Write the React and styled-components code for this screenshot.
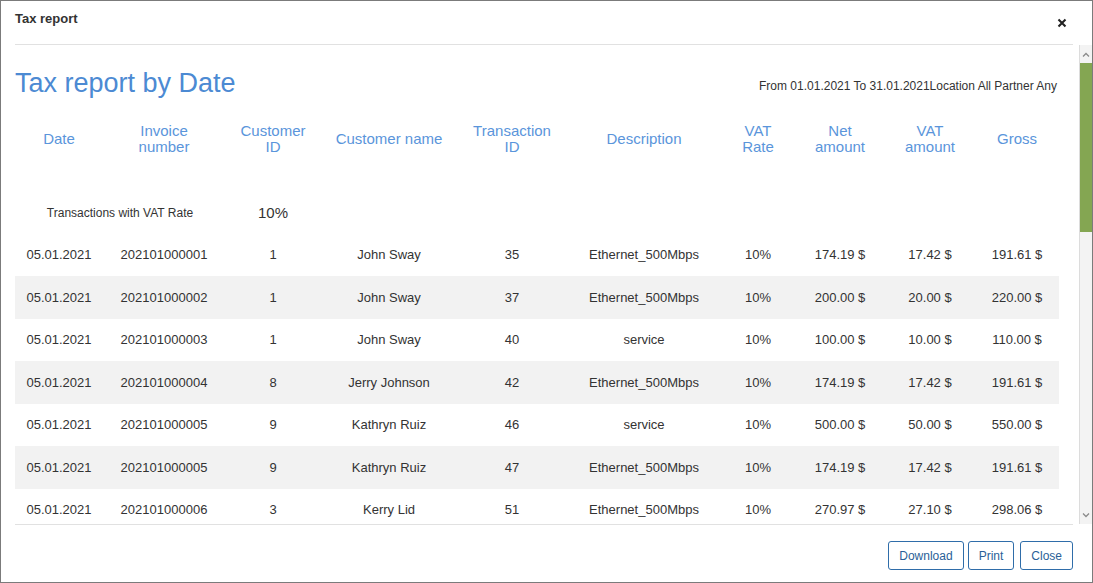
import React from 'react';
import styled, { createGlobalStyle } from 'styled-components';

const GlobalStyle = createGlobalStyle`
  html, body {
    margin: 0;
    padding: 0;
    background: #fff;
  }
  body {
    font-family: "Liberation Sans", Arial, sans-serif;
    color: #333;
  }
`;

const COLS = '88px 122px 96px 136px 110px 154px 74px 90px 90px 84px';

const Modal = styled.div`
  width: 1093px;
  height: 583px;
  box-sizing: border-box;
  border: 1px solid #7b7b7b;
  background: #fff;
  display: flex;
  flex-direction: column;
  overflow: hidden;
`;

const Header = styled.div`
  height: 43px;
  margin: 0 19px 0 14px;
  border-bottom: 1px solid #e1e1e1;
  display: flex;
  justify-content: space-between;
  align-items: flex-start;
`;

const ModalTitle = styled.div`
  padding-top: 9px;
  font-size: 13px;
  line-height: 17px;
  font-weight: bold;
  color: #333;
`;

const CloseX = styled.button`
  margin: 17px 6px 0 0;
  padding: 0;
  border: 0;
  background: none;
  width: 10px;
  height: 10px;
  display: flex;
  cursor: pointer;
`;

const Body = styled.div`
  height: 479px;
  display: flex;
`;

const Content = styled.div`
  flex: 1;
  padding: 0 20px 0 14px;
  overflow: hidden;
`;

const TitleRow = styled.div`
  display: flex;
  justify-content: space-between;
  align-items: flex-start;
  padding-top: 23px;
`;

const ReportTitle = styled.h1`
  margin: 0;
  font-size: 27px;
  line-height: 31px;
  font-weight: normal;
  color: #4c8ad3;
`;

const Filters = styled.div`
  margin: 11px 2px 0 0;
  font-size: 12px;
  line-height: 14px;
  color: #333;
`;

const Grid = styled.div`
  display: grid;
  grid-template-columns: ${COLS};
  align-items: center;
  text-align: center;
`;

const HeadRow = styled(Grid)`
  height: 50px;
  margin-top: 14.5px;
  font-size: 15px;
  line-height: 16px;
  color: #5a95db;
`;

const GroupRow = styled(Grid)`
  height: 42px;
  padding-top: 28px;
`;

const GroupLabel = styled.div`
  grid-column: span 2;
  font-size: 12px;
  color: #333;
`;

const GroupRate = styled.div`
  font-size: 15px;
  color: #333;
`;

const Row = styled(Grid)`
  height: 42.5px;
  font-size: 13px;
  color: #333;
  background: ${(p) => (p.$striped ? '#f2f2f2' : 'transparent')};
`;

const Scrollbar = styled.div`
  width: 12px;
  border-left: 1px solid #dcdcdc;
  background: #f3f3f3;
  display: flex;
  flex-direction: column;
`;

const ScrollArrow = styled.div`
  height: 18px;
  display: flex;
  align-items: center;
  justify-content: center;
`;

const Thumb = styled.div`
  height: 169px;
  background: #84a652;
`;

const ScrollTrack = styled.div`
  flex: 1;
`;

const Footer = styled.div`
  flex: 1;
  margin: 0 19px 0 14px;
  border-top: 1px solid #e1e1e1;
  display: flex;
  justify-content: flex-end;
  align-items: flex-start;
  padding-top: 16px;
  gap: 4px;
`;

const Button = styled.button`
  height: 29px;
  padding: 0 10px;
  border: 1px solid #2f6da9;
  border-radius: 3px;
  background: #fff;
  color: #2a5f98;
  font-family: "Liberation Sans", Arial, sans-serif;
  font-size: 12px;
  cursor: pointer;
  &:last-child {
    margin-left: 2px;
  }
`;

const headers = [
  ['Date'],
  ['Invoice', 'number'],
  ['Customer', 'ID'],
  ['Customer name'],
  ['Transaction', 'ID'],
  ['Description'],
  ['VAT', 'Rate'],
  ['Net', 'amount'],
  ['VAT', 'amount'],
  ['Gross'],
];

const rows = [
  ['05.01.2021', '202101000001', '1', 'John Sway', '35', 'Ethernet_500Mbps', '10%', '174.19 $', '17.42 $', '191.61 $'],
  ['05.01.2021', '202101000002', '1', 'John Sway', '37', 'Ethernet_500Mbps', '10%', '200.00 $', '20.00 $', '220.00 $'],
  ['05.01.2021', '202101000003', '1', 'John Sway', '40', 'service', '10%', '100.00 $', '10.00 $', '110.00 $'],
  ['05.01.2021', '202101000004', '8', 'Jerry Johnson', '42', 'Ethernet_500Mbps', '10%', '174.19 $', '17.42 $', '191.61 $'],
  ['05.01.2021', '202101000005', '9', 'Kathryn Ruiz', '46', 'service', '10%', '500.00 $', '50.00 $', '550.00 $'],
  ['05.01.2021', '202101000005', '9', 'Kathryn Ruiz', '47', 'Ethernet_500Mbps', '10%', '174.19 $', '17.42 $', '191.61 $'],
  ['05.01.2021', '202101000006', '3', 'Kerry Lid', '51', 'Ethernet_500Mbps', '10%', '270.97 $', '27.10 $', '298.06 $'],
];

function Chevron({ up }) {
  return (
    <svg width="8" height="5" viewBox="0 0 8 5">
      <path
        d={up ? 'M1 4.5 L4 1.5 L7 4.5' : 'M1 0.5 L4 3.5 L7 0.5'}
        fill="none"
        stroke="#8a8a8a"
        strokeWidth="1.3"
      />
    </svg>
  );
}

export default function App() {
  return (
    <>
      <GlobalStyle />
      <Modal>
        <Header>
          <ModalTitle>Tax report</ModalTitle>
          <CloseX aria-label="Close">
            <svg width="10" height="10" viewBox="0 0 10 10">
              <path d="M1.5 1.5 L8.5 8.5 M8.5 1.5 L1.5 8.5" stroke="#222" strokeWidth="2.1" />
            </svg>
          </CloseX>
        </Header>
        <Body>
          <Content>
            <TitleRow>
              <ReportTitle>Tax report by Date</ReportTitle>
              <Filters>From 01.01.2021 To 31.01.2021Location All Partner Any</Filters>
            </TitleRow>
            <HeadRow>
              {headers.map((h, i) => (
                <div key={i}>
                  {h.map((line, j) => (
                    <div key={j}>{line}</div>
                  ))}
                </div>
              ))}
            </HeadRow>
            <GroupRow>
              <GroupLabel>Transactions with VAT Rate</GroupLabel>
              <GroupRate>10%</GroupRate>
            </GroupRow>
            {rows.map((r, i) => (
              <Row key={i} $striped={i % 2 === 1}>
                {r.map((c, j) => (
                  <div key={j}>{c}</div>
                ))}
              </Row>
            ))}
          </Content>
          <Scrollbar>
            <ScrollArrow>
              <Chevron up />
            </ScrollArrow>
            <Thumb />
            <ScrollTrack />
            <ScrollArrow>
              <Chevron />
            </ScrollArrow>
          </Scrollbar>
        </Body>
        <Footer>
          <Button>Download</Button>
          <Button>Print</Button>
          <Button>Close</Button>
        </Footer>
      </Modal>
    </>
  );
}
